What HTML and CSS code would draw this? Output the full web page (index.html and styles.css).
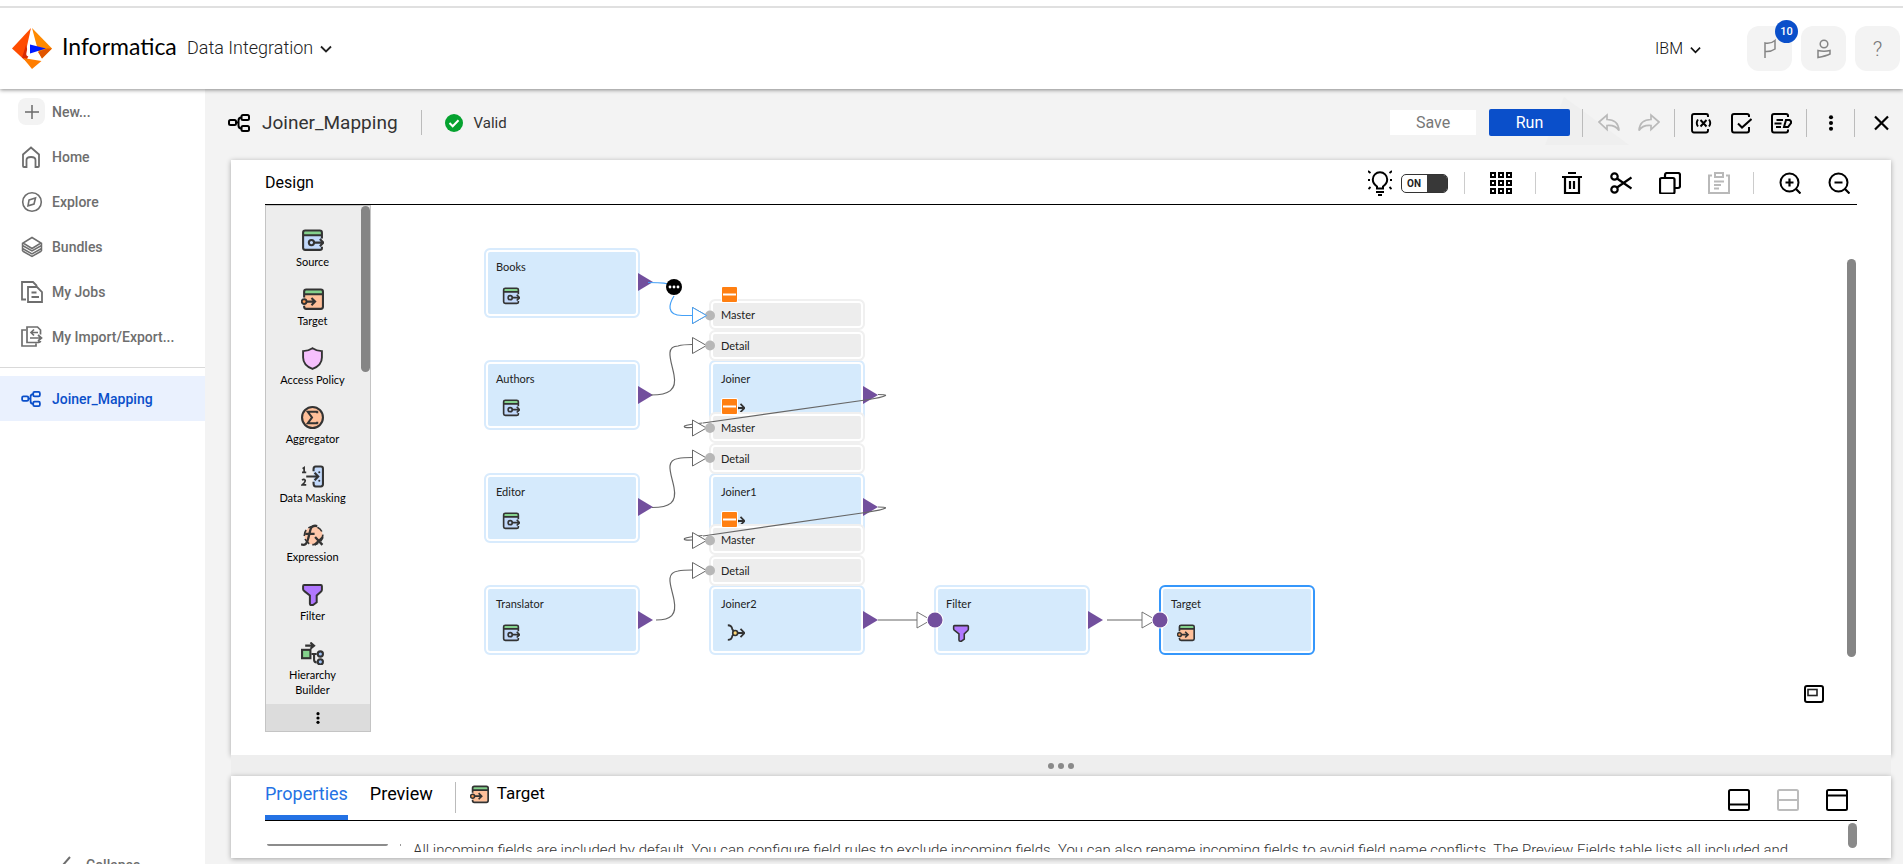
FILE: index.html
```html
<!DOCTYPE html>
<html lang="en">
<head>
<meta charset="utf-8">
<title>Joiner_Mapping - Data Integration</title>
<link rel="stylesheet" href="styles.css">
</head>
<body>
<svg class="symbols" aria-hidden="true">
  <symbol id="i-mapping" viewBox="0 0 22 18"><g fill="none" stroke="currentColor" stroke-width="2"><rect x="1" y="6" width="7" height="5" rx="1.5"/><rect x="13.500" y="1" width="7.500" height="5" rx="1.500"/><rect x="13.500" y="12" width="7.500" height="5" rx="1.500"/><path d="M8 8.500h2.500M13.500 3.500c-2 0-3 .8-3 3v5c0 2.200 1 3 3 3"/></g></symbol>
  <symbol id="i-chev" viewBox="0 0 12 8"><path d="M1 1.500l5 5 5-5" fill="none" stroke="currentColor" stroke-width="1.800"/></symbol>
  <symbol id="i-source" viewBox="0 0 22 22"><path d="M2 6h18v13.500H2z" fill="#c2d9fb"/><path d="M2 2h18v4H2z" fill="#84d18c"/><path d="M20 9V3.500Q20 1.500 18 1.500H4Q2 1.500 2 3.500V18Q2 20 4 20h14q2 0 2-1.500V17M2 6h18" fill="none" stroke="#333" stroke-width="2"/><circle cx="10" cy="13" r="2.500" fill="#c2d9fb" stroke="#333" stroke-width="2"/><path d="M12.500 13H21M18 9.500l3.500 3.500-3.500 3.500" fill="none" stroke="#333" stroke-width="2"/></symbol>
  <symbol id="i-target" viewBox="0 0 22 22"><path d="M3 6h17.500v13.500H3z" fill="#ffc09a"/><path d="M3 2h17.500v4H3z" fill="#84d18c"/><path d="M3 9V3.500Q3 1.500 5 1.500h14q2 0 2 2V18q0 2-2 2H5q-2 0-2-2v-1M3 6h18" fill="none" stroke="#333" stroke-width="2"/><circle cx="3" cy="13" r="2.300" fill="#ff9a52" stroke="#333" stroke-width="1.800"/><path d="M5.500 13H13M10 9.500l3.500 3.500-3.500 3.500" fill="none" stroke="#333" stroke-width="2"/></symbol>
  <symbol id="i-shield" viewBox="0 0 22 22"><path d="M11 1.200c2.500 1.700 5.500 2.600 9 2.800v6c0 5.500-3.500 8.800-9 11-5.500-2.200-9-5.500-9-11V4c3.500-.2 6.500-1.100 9-2.800z" fill="#f6c0fd" stroke="#333" stroke-width="1.800"/></symbol>
  <symbol id="i-aggr" viewBox="0 0 22 22"><circle cx="11" cy="11" r="10" fill="#ffc09a" stroke="#333" stroke-width="2"/><path d="M16 5.500H6.500l4 5.500-4 5.500H16M15.500 5v2M15.500 17v-2" fill="none" stroke="#333" stroke-width="2"/></symbol>
  <symbol id="i-mask" viewBox="0 0 22 22"><path d="M12 2h9v18h-9z" fill="#c2d9fb"/><path d="M12 6V4q0-2.500 2-2.500h5q2 0 2 2v15q0 2-2 2h-5q-2 0-2-3v-1.500M5 11h11M13 7.500l3.500 3.500-3.500 3.500" fill="none" stroke="#333" stroke-width="2"/><path d="M1.500 3.500L3 2.500v4.500M1 7h4M1 14.500q1.800-1.500 3 0Q4.500 16 1.200 19H5" fill="none" stroke="#333" stroke-width="1.600"/><circle cx="17.500" cy="7" r="1" fill="#333"/><circle cx="17.500" cy="15" r="1" fill="#333"/></symbol>
  <symbol id="i-fx" viewBox="0 0 22 22"><circle cx="12" cy="11" r="8.800" fill="#ffc8aa" stroke="#333" stroke-width="1.600" stroke-dasharray="6 3"/><path d="M0 19.500c4 1.500 6-1 7-6L9 5.500C9.800 2.500 12 1 15.500 2M4 9.500h9" fill="none" stroke="#333" stroke-width="2.200"/><path d="M13.500 12.500l7 7.500M21 12.500l-8 7.500" stroke="#333" stroke-width="2.200"/></symbol>
  <symbol id="i-filter" viewBox="0 0 22 22"><path d="M3 2h16q1 0 1 1v3.500q0 1-1 1.800l-4 3.700v6.500L11.500 21H10q-1.500 0-1.500-1.500V12l-5-4Q2 7 2 6V3q0-1 1-1z" fill="#b178ff" stroke="#333" stroke-width="1.900"/></symbol>
  <symbol id="i-hier" viewBox="0 0 22 22"><rect x="1" y="7.500" width="8" height="8" fill="#84d18c" stroke="#333" stroke-width="2"/><path d="M4 3.500h8M9 .5l3.500 3L9 6.500M10 11.500h5M12.500 11.500V17q0 2.500 2.500 2.500" fill="none" stroke="#333" stroke-width="2"/><circle cx="18.500" cy="11.500" r="2.500" fill="#9dc0f5" stroke="#333" stroke-width="2"/><circle cx="18.500" cy="19" r="2.500" fill="#9dc0f5" stroke="#333" stroke-width="2"/></symbol>
  <symbol id="i-joiner" viewBox="0 0 22 22"><path d="M1 1.500C4 1.500 6 3 6.500 6.500L8.500 9M1 19.500c3 0 5-1.500 5.500-5l2-2M12 11h9.500M16.500 6l5 5-5 5" fill="none" stroke="#333" stroke-width="2.200"/><circle cx="10" cy="11" r="3" fill="#ffd978" stroke="#333" stroke-width="2"/></symbol>
</svg>

<header class="topbar">
  <svg class="logo" viewBox="0 0 40 41" aria-hidden="true"><path d="M19 0L0 20.500l12 11z" fill="#ff4d00"/><path d="M10 29.500L14 17l3 10-3 6z" fill="#d92b00"/><path d="M20 0l20 20.500-10 10-4-8z" fill="#ff8a00"/><path d="M26 24l9-3.500 5 0-10 10z" fill="#e05500"/><path d="M11 30l18.500 3L20 41z" fill="#ff7d00"/><path d="M19.500 0l-5 24.500q-1 3.500 2 4l13.500 3.500L18 23z" fill="#fff"/><path d="M18 16.500l16 4-16 5z" fill="#001aff"/></svg>
  <span class="brand">Informatica</span>
  <button class="product">Data Integration <svg class="chev" aria-hidden="true"><use href="#i-chev"/></svg></button>
  <button class="org">IBM <svg class="chev small" aria-hidden="true"><use href="#i-chev"/></svg></button>
  <nav class="top-actions" aria-label="Account">
    <button class="tile" aria-label="Notifications"><svg width="22" height="22" viewBox="0 0 22 22"><path d="M6 20V5q6 1 10-2.500V11q-4 3-10 2.500" fill="none" stroke="#858585" stroke-width="1.500"/></svg><span class="badge">10</span></button>
    <button class="tile" aria-label="User"><svg width="22" height="22" viewBox="0 0 22 22"><circle cx="11" cy="6" r="3.800" fill="none" stroke="#858585" stroke-width="1.500"/><path d="M5 12.500q6 1.500 12 0V16q-4 2-12 3.500z" fill="none" stroke="#858585" stroke-width="1.500"/></svg></button>
    <button class="tile help" aria-label="Help">?</button>
  </nav>
</header>

<div class="shell">
  <nav class="sidebar" aria-label="Main">
    <a class="side" href="#"><span class="plus"><svg width="14" height="14" viewBox="0 0 14 14"><path d="M7 0v14M0 7h14" stroke="#6b6b6b" stroke-width="1.500"/></svg></span>New...</a>
    <a class="side" href="#"><svg class="si" viewBox="0 0 22 22"><path d="M2 8.500L10 1.500l8 7V20q0 1-1 1h-2.500V14q0-3-4.500-3t-4.500 3v7H3q-1 0-1-1z" fill="none" stroke="currentColor" stroke-width="1.800"/></svg>Home</a>
    <a class="side" href="#"><svg class="si" viewBox="0 0 22 22"><circle cx="11" cy="11" r="9.300" fill="none" stroke="currentColor" stroke-width="1.600"/><path d="M8 9l6.500-2L13 13l-6 1.800z" fill="none" stroke="currentColor" stroke-width="1.600"/></svg>Explore</a>
    <a class="side" href="#"><svg class="si" viewBox="0 0 22 22"><path d="M11 1.500L20 7l-9 5.500L2 7zM1.500 9.500L11 15l9.500-5.500M1.500 12.500L11 18l9.500-5.500M1.500 15L11 20.500l9.500-5.500M1.500 7v8M20.500 7v8" fill="none" stroke="currentColor" stroke-width="1.500"/></svg>Bundles</a>
    <a class="side" href="#"><svg class="si" viewBox="0 0 22 22"><path d="M5 18.500H1V1h11l4 4M7 6h9l5 5v10H7zM10.500 11.500h5M10.500 16H18" fill="none" stroke="currentColor" stroke-width="1.800"/></svg>My Jobs</a>
    <a class="side" href="#"><svg class="si" viewBox="0 0 22 22"><path d="M5 4H1v16h14v-2.500M19.500 8.500V4l-3-3H6v15.500h10q3.500 0 3.500-1.500M20 12H9M17 9l3.500 3-3.500 3M10 6.500h7M13 3.500l-3 3 3 3" fill="none" stroke="currentColor" stroke-width="1.700"/></svg>My Import/Export...</a>
    <hr class="side-rule">
    <a class="side active" href="#" aria-current="page"><svg class="si map"><use href="#i-mapping"/></svg>Joiner_Mapping</a>
    <button class="collapse"><svg width="10" height="18" viewBox="0 0 10 18"><path d="M9 1L2 9l7 8" fill="none" stroke="currentColor" stroke-width="2"/></svg>Collapse</button>
  </nav>

  <main class="main">
    <div class="docbar">
      <svg class="doc-icon" aria-hidden="true"><use href="#i-mapping"/></svg>
      <h1>Joiner_Mapping</h1>
      <span class="vr"></span>
      <svg class="ok" viewBox="0 0 18 18" aria-hidden="true"><circle cx="9" cy="9" r="9" fill="#05a22f"/><path d="M4.500 9l3.200 3.200 5.800-6" fill="none" stroke="#fff" stroke-width="2"/></svg>
      <span class="valid">Valid</span>
      <div class="doc-actions">
        <svg class="mark" viewBox="0 0 84 48" aria-hidden="true"><path d="M19 0l65 48H0z" fill="#efefef"/></svg>
        <button class="save" disabled>Save</button>
        <button class="run">Run</button>
        <span class="vr"></span>
        <button class="ib" aria-label="Undo" disabled><svg viewBox="0 0 22 22"><path d="M1 10l8-7v4.500c7 0 11.500 4 12 11-2.500-4-6-5.500-12-5v4z" fill="none" stroke="#b9b9b9" stroke-width="1.700"/></svg></button>
        <button class="ib" aria-label="Redo" disabled><svg viewBox="0 0 22 22"><path d="M21 10l-8-7v4.500C6 7.500 1.500 11.500 1 18.500c2.500-4 6-5.500 12-5v4z" fill="none" stroke="#b9b9b9" stroke-width="1.700"/></svg></button>
        <span class="vr"></span>
        <button class="ib" aria-label="Parameters"><svg viewBox="0 0 22 22"><path d="M18 5V3.500Q18 2 16 2H4Q2 2 2 4v14q0 2.500 2 2.500h12q2 0 2-2V17M8 7.500Q5.500 11 8 14.500M19 7.500q2.500 3.500 0 7M10.500 8l6 6.500M16.500 8l-6 6.500" fill="none" stroke="#000" stroke-width="1.900"/></svg></button>
        <button class="ib" aria-label="Validate"><svg viewBox="0 0 22 22"><path d="M19 5V3.500Q19 2 17 2H4Q2 2 2 4v14q0 2.500 2 2.500h13q2 0 2-2V15M8 11.500l4 4L21.500 7" fill="none" stroke="#000" stroke-width="2"/></svg></button>
        <button class="ib" aria-label="Edit notes"><svg viewBox="0 0 22 22"><path d="M18 5V3.500Q18 2 16 2H4Q2 2 2 4v14q0 2.500 2 2.500h12q2 0 2-2V17.500M6.500 8H13M4.500 11.500h7M6 15h5M14 15l2-7h3.500q2 1 1.500 3l-3 4z" fill="none" stroke="#000" stroke-width="2"/></svg></button>
        <span class="vr"></span>
        <button class="ib narrow" aria-label="More"><svg viewBox="0 0 22 22"><circle cx="11" cy="4" r="2.500"/><circle cx="11" cy="11" r="2.500"/><circle cx="11" cy="18" r="2.500"/></svg></button>
        <span class="vr"></span>
        <button class="ib" aria-label="Close"><svg viewBox="0 0 22 22"><path d="M5 4.500l13 13M18 4.500l-13 13" stroke="#000" stroke-width="2.200"/></svg></button>
      </div>
    </div>

    <section class="panel design">
      <div class="panel-head">
        <h2>Design</h2>
        <div class="tools">
          <svg class="bulb" viewBox="0 0 24 26" aria-hidden="true"><path d="M9 18.500v-2C5.500 14 4.800 11.500 4.800 9.500a7.200 7.200 0 0 1 14.400 0c0 2-.7 4.500-4.200 7v2zM8 22h8M10 25h4" fill="none" stroke="#000" stroke-width="2"/><path d="M0 1l2.500 2M24 1l-2.500 2M0 10h2M24 10h-2M.5 19l2-2M23.500 19l-2-2" stroke="#000" stroke-width="1.800"/></svg>
          <button class="toggle" role="switch" aria-checked="true" aria-label="Recommendations"><span>ON</span><i></i></button>
          <span class="vr"></span>
          <button class="ib" aria-label="Grid"><svg viewBox="0 0 22 22"><g fill="none" stroke="#000" stroke-width="2"><rect x="1" y="1" width="4" height="4"/><rect x="9" y="1" width="4" height="4"/><rect x="17" y="1" width="4" height="4"/><rect x="1" y="9" width="4" height="4"/><rect x="9" y="9" width="4" height="4"/><rect x="17" y="9" width="4" height="4"/><rect x="1" y="17" width="4" height="4"/><rect x="9" y="17" width="4" height="4"/><rect x="17" y="17" width="4" height="4"/></g></svg></button>
          <span class="vr"></span>
          <button class="ib" aria-label="Delete"><svg viewBox="0 0 22 22"><path d="M7 1h8M1 5h20M4 5v16h14V5M9 9v8M13 9v8" fill="none" stroke="#000" stroke-width="2.200"/></svg></button>
          <button class="ib" aria-label="Cut"><svg viewBox="0 0 22 22"><g fill="none" stroke="#000" stroke-width="2.200"><circle cx="4.500" cy="4.500" r="3.200"/><circle cx="4.500" cy="17.500" r="3.200"/><path d="M7 6.500L21.500 16.500M7 15.500L21.500 5.500"/></g></svg></button>
          <button class="ib" aria-label="Copy"><svg viewBox="0 0 22 22"><path d="M1 7.500Q1 6 2.500 6H14q1.500 0 1.500 1.500V20q0 1.500-1.500 1.500H2.500Q1 21.500 1 20zM6 5.500V3Q6 1 8 1h11q2 0 2 2v11q0 2-2 2h-3" fill="none" stroke="#000" stroke-width="2.200"/></svg></button>
          <button class="ib" aria-label="Paste" disabled><svg viewBox="0 0 22 22"><path d="M4 3.500H1V21h20V3.500h-3M7 1h8v4H7zM6 9.500h10M6 13h7M6 16.500h5" fill="none" stroke="#b9b9b9" stroke-width="2"/></svg></button>
          <span class="vr"></span>
          <button class="ib" aria-label="Zoom in"><svg viewBox="0 0 22 22"><circle cx="10.500" cy="10.500" r="9" fill="none" stroke="#000" stroke-width="2"/><path d="M17 17l4.500 4.500M6.500 10.500h8M10.500 6.500v8" stroke="#000" stroke-width="2.200"/></svg></button>
          <button class="ib" aria-label="Zoom out"><svg viewBox="0 0 22 22"><circle cx="10.500" cy="10.500" r="9" fill="none" stroke="#000" stroke-width="2"/><path d="M17 17l4.500 4.500M6.500 10.500h8" stroke="#000" stroke-width="2.200"/></svg></button>
        </div>
      </div>
      <div class="workspace">
        <div class="palette">
          <ul class="palette-list">
            <li><svg><use href="#i-source"/></svg>Source</li>
            <li><svg><use href="#i-target"/></svg>Target</li>
            <li><svg><use href="#i-shield"/></svg>Access Policy</li>
            <li><svg><use href="#i-aggr"/></svg>Aggregator</li>
            <li><svg><use href="#i-mask"/></svg>Data Masking</li>
            <li><svg><use href="#i-fx"/></svg>Expression</li>
            <li><svg><use href="#i-filter"/></svg>Filter</li>
            <li><svg><use href="#i-hier"/></svg>Hierarchy Builder</li>
          </ul>
          <span class="thumb palette-thumb"></span>
          <button class="palette-more" aria-label="More transformations"><svg width="4" height="12" viewBox="0 0 4 12"><circle cx="2" cy="1.700" r="1.600"/><circle cx="2" cy="6" r="1.600"/><circle cx="2" cy="10.300" r="1.600"/></svg></button>
        </div>
        <div class="canvas">
          <div class="node n-books">Books<svg><use href="#i-source"/></svg></div>
          <div class="node n-authors">Authors<svg><use href="#i-source"/></svg></div>
          <div class="node n-editor">Editor<svg><use href="#i-source"/></svg></div>
          <div class="node n-translator">Translator<svg><use href="#i-source"/></svg></div>
          <div class="node n-joiner">Joiner<svg><use href="#i-joiner"/></svg></div>
          <div class="node n-joiner1">Joiner1<svg><use href="#i-joiner"/></svg></div>
          <div class="node n-joiner2">Joiner2<svg><use href="#i-joiner"/></svg></div>
          <div class="group g0"><div class="port">Master</div><div class="port">Detail</div></div>
          <div class="group g1"><div class="port">Master</div><div class="port">Detail</div></div>
          <div class="group g2"><div class="port">Master</div><div class="port">Detail</div></div>
          <div class="node n-filter">Filter<svg><use href="#i-filter"/></svg></div>
          <div class="node n-target selected">Target<svg><use href="#i-target"/></svg></div>
          <svg class="links" aria-hidden="true">
            <defs>
              <path id="out" d="M0-9l15 9-15 9z" fill="#724f9d"/>
              <g id="in"><path d="M0-8l14 8-14 8z" fill="#fff" stroke="#666"/><circle cx="17.500" cy="0" r="5" fill="#b7b7b7"/></g>
              <g id="in2"><path d="M0-8l14 8-14 8z" fill="#fff" stroke="#777"/><circle cx="18" cy="0" r="8.500" fill="#fff"/><circle cx="18" cy="0" r="7.500" fill="#724f9d"/></g>
              <g id="minus"><rect x="-1" y="-1" width="17" height="17" rx="2" fill="#fff"/><rect width="15" height="15" rx="1" fill="#ff7f11"/><path d="M1 7.500h13" stroke="#fff" stroke-width="2"/></g>
            </defs>
            <g transform="translate(-371 -205)">
              <use href="#out" x="638" y="282"/><use href="#out" x="638" y="395"/><use href="#out" x="638" y="507"/><use href="#out" x="638" y="620"/>
              <use href="#out" x="863" y="395"/><use href="#out" x="863" y="507"/><use href="#out" x="863" y="620"/><use href="#out" x="1088" y="620"/>
              <g fill="none" stroke="#666" stroke-width="1.200">
                <path d="M648 282.500c12 0 22 0 25 5M674 296c-5 8-8 19 8 19.500h10" stroke="#45a1f7"/>
                <path d="M651 395c18 0 26-5 23-20-2-12-10-29 4-29q5-1.500 14-1.500"/>
                <path d="M652 507.500c18 0 25-5 22-20-2-12-10-27 4-29q5-1 14-1"/>
                <path d="M656 620c15 0 21-5 18-20-2-12-10-27 4-29q5-1 14-1"/>
                <path d="M878 394.500q8 0 7.500 1-3 2-20 4.500L703 423M692 427.500q-9 .5-7.500-1.500 3-1.500 18-3"/>
                <path d="M878 507q8 0 7.500 1-3 2-20 4.500L703 536M692 540q-9 .5-7.500-1.500 3-1.500 18-3"/>
                <path d="M878 620h39M1107 620h36"/>
              </g>
              <use href="#in" x="692.500" y="315.500"/><use href="#in" x="692.500" y="345.500"/><use href="#in" x="692.500" y="428"/><use href="#in" x="692.500" y="458"/><use href="#in" x="692.500" y="540.500"/><use href="#in" x="692.500" y="570.500"/>
              <path d="M692.500 307.500l14 8-14 8z" fill="#fff" stroke="#45a1f7"/>
              <use href="#in2" x="917" y="620"/><use href="#in2" x="1142" y="620"/>
              <use href="#minus" x="722" y="287"/><use href="#minus" x="722" y="399"/><use href="#minus" x="722" y="512"/>
              <circle cx="674" cy="287" r="8"/><g fill="#fff"><circle cx="670" cy="287" r="1.400"/><circle cx="674" cy="287" r="1.400"/><circle cx="678" cy="287" r="1.400"/></g>
            </g>
          </svg>
          <span class="thumb canvas-thumb"></span>
          <button class="minimap" aria-label="Overview map"><svg width="20" height="18" viewBox="0 0 20 18"><rect x="1" y="1" width="18" height="16" rx="2" fill="none" stroke="#000" stroke-width="2"/><rect x="4" y="4.500" width="9" height="6" fill="none" stroke="#222" stroke-width="1.600"/></svg></button>
        </div>
      </div>
    </section>

    <div class="splitter" role="separator"><i></i><i></i><i></i></div>

    <section class="panel props">
      <div class="props-head">
        <button class="tab on">Properties</button>
        <button class="tab">Preview</button>
        <span class="vr"></span>
        <svg class="obj-icon" aria-hidden="true"><use href="#i-target"/></svg>
        <span class="obj">Target</span>
        <div class="views">
          <button class="ib" aria-label="Minimize panel"><svg viewBox="0 0 22 22"><rect x="1" y="1" width="20" height="20" rx="1.500" fill="none" stroke="#000" stroke-width="2"/><path d="M1 15.500h20" stroke="#000" stroke-width="2"/></svg></button>
          <button class="ib" aria-label="Split panel" disabled><svg viewBox="0 0 22 22"><rect x="1" y="1" width="20" height="20" rx="1.500" fill="none" stroke="#bcbcbc" stroke-width="2"/><path d="M1 11h20" stroke="#bcbcbc" stroke-width="2"/></svg></button>
          <button class="ib" aria-label="Maximize panel"><svg viewBox="0 0 22 22"><rect x="1" y="1" width="20" height="20" rx="1.500" fill="none" stroke="#000" stroke-width="2"/><path d="M1 6.500h20" stroke="#000" stroke-width="2"/></svg></button>
        </div>
      </div>
      <div class="props-body">
        <span class="cutoff"></span><span class="tick"></span>
        <p>All incoming fields are included by default. You can configure field rules to exclude incoming fields. You can also rename incoming fields to avoid field name conflicts. The Preview Fields table lists all included and</p>
        <span class="thumb props-thumb"></span>
      </div>
    </section>
  </main>
</div>
</body>
</html>
```
FILE: styles.css
```css
* { box-sizing: border-box; }
body {
  margin: 0;
  height: 100vh;
  overflow: hidden;
  display: flex;
  flex-direction: column;
  background: #fff;
  font-family: Roboto, "Liberation Sans", sans-serif;
  color: #222;
}
button { border: 0; padding: 0; background: none; font: inherit; color: inherit; }
h1, h2, p, ul { margin: 0; padding: 0; font-weight: 400; }
svg { display: block; flex: none; }
.symbols { position: absolute; width: 0; height: 0; }

.topbar {
  position: relative;
  z-index: 2;
  flex: none;
  height: 89px;
  padding: 8px 3px 0 12px;
  display: flex;
  align-items: center;
  background: linear-gradient(#fff 6px, #e0e0e0 6px, #e0e0e0 8px, #fff 8px);
  box-shadow: 0 1px 4px rgba(0, 0, 0, .45);
}
.logo { width: 40px; height: 41px; }
.brand { margin-left: 10px; padding-bottom: 5px; width: 125px; font: 23px/30px Lato, sans-serif; color: #000; }
.product { display: flex; align-items: center; gap: 7px; padding-bottom: 2px; font-size: 18px; font-weight: 300; color: #222; }
.chev { width: 12px; height: 8px; margin-top: 2px; }
.chev.small { width: 11px; }
.org { margin-left: auto; display: flex; align-items: center; gap: 7px; font-size: 16px; font-weight: 300; color: #111; }
.top-actions { display: flex; gap: 9px; margin-left: 46px; }
.tile {
  position: relative;
  width: 45px;
  height: 45px;
  border-radius: 12px;
  background: #f3f3f3;
  display: flex;
  align-items: center;
  justify-content: center;
}
.help { font-size: 21px; font-weight: 300; color: #777; }
.badge {
  position: absolute;
  top: -6px;
  right: -6px;
  width: 23px;
  height: 23px;
  border-radius: 50%;
  background: #0a4fca;
  color: #fff;
  font-size: 11px;
  font-weight: 500;
  line-height: 23px;
}

.shell { flex: 1; min-height: 0; display: flex; }
.sidebar { flex: none; width: 205px; display: flex; flex-direction: column; overflow: hidden; background: #fff; }
.side {
  flex: none;
  display: flex;
  align-items: center;
  height: 45px;
  padding-left: 52px;
  font-size: 14px;
  font-weight: 500;
  color: #6e6e6e;
  text-decoration: none;
}
.si { width: 22px; height: 22px; margin: 0 9px 0 -31px; }
.si.map { width: 20px; height: 16px; margin-right: 11px; }
.plus {
  width: 27px;
  height: 27px;
  margin: 0 7px 0 -34px;
  border-radius: 8px;
  background: #f3f3f3;
  display: flex;
  align-items: center;
  justify-content: center;
}
.side-rule { flex: none; width: 100%; height: 1px; margin: 8px 0; border: 0; background: #d9d9d9; }
.active { background: #eaf1fe; color: #0a4fca; }
.collapse {
  margin: auto 0 -13px;
  padding-left: 61px;
  height: 24px;
  display: flex;
  align-items: center;
  gap: 15px;
  font-size: 14px;
  font-weight: 500;
  color: #6e6e6e;
}

.main { flex: 1; min-width: 0; display: flex; flex-direction: column; background: #f3f3f3; padding: 0 12px 6px 26px; }
.docbar { flex: none; height: 71px; padding-bottom: 4px; display: flex; align-items: center; margin-right: -12px; margin-left: -3px; }
.doc-icon { width: 22px; height: 18px; color: #000; }
.docbar h1 { margin-left: 12px; font-size: 19px; font-weight: 400; color: #333; }
.vr { flex: none; width: 1px; height: 25px; background: #bbb; }
.docbar > .vr { margin: 0 23px; }
.ok { width: 18px; height: 18px; }
.valid { margin-left: 11px; font-size: 15px; color: #333; }
.doc-actions { position: relative; margin-left: auto; display: flex; align-items: center; padding-right: 2px; }
.doc-actions > * { position: relative; }
.doc-actions .vr { height: 28px; }
.doc-actions .mark { position: absolute; left: 155px; top: -12px; width: 84px; height: 48px; }
.save { width: 86px; height: 25px; margin-right: 13px; background: #fff; color: #777; font-size: 16px; }
.run { width: 81px; height: 27px; margin-right: 12px; border-radius: 2px; background: #0a4fca; color: #fff; font-size: 16px; }
.ib { width: 40px; height: 28px; display: flex; align-items: center; justify-content: center; }
.ib svg { width: 22px; height: 22px; }
.doc-actions .vr + .ib { margin-left: 6px; }
.doc-actions .ib + .vr { margin-left: 5px; }
.doc-actions .narrow { width: 36px; }
.doc-actions .narrow svg { width: 18px; height: 18px; }

.panel { background: #fff; box-shadow: 0 1px 5px rgba(0, 0, 0, .32); }
.design { flex: 1; min-height: 0; display: flex; flex-direction: column; padding: 0 34px 23px; }
.panel-head { flex: none; height: 45px; display: flex; align-items: center; border-bottom: 1px solid #000; padding-top: 2px; }
.panel-head h2 { font-size: 16px; line-height: 20px; color: #000; }
.tools { margin-left: auto; display: flex; align-items: center; margin-right: -6px; }
.tools .vr { height: 22px; background: #ccc; }
.tools .ib { width: 49px; }
.tools .vr + .ib { margin-left: 11px; }
.tools .ib + .vr { margin-left: 10px; }
.tools .toggle + .vr { margin-left: 16px; }
.bulb { width: 24px; height: 26px; margin-right: 9px; }
.toggle {
  width: 47px;
  height: 19px;
  border: 1px solid #333;
  border-radius: 5px;
  display: flex;
  align-items: center;
  justify-content: space-between;
  overflow: hidden;
  padding-left: 5px;
  font-size: 10px;
  font-weight: 700;
  color: #222;
}
.toggle i { width: 20px; height: 19px; background: #383838; }

.workspace { flex: 1; min-height: 0; display: flex; }
.palette {
  position: relative;
  flex: none;
  width: 106px;
  border: 1px solid #c4c4c4;
  background: #ededed;
  display: flex;
  flex-direction: column;
  font-family: Lato, sans-serif;
  font-size: 11px;
  font-weight: 300;
  color: #000;
}
.palette-list { flex: 1; min-height: 0; overflow: hidden; list-style: none; padding: 23px 11px 0 0; }
.palette-list li {
  min-height: 59px;
  padding: 0 16px;
  display: flex;
  flex-direction: column;
  align-items: center;
  gap: 2px;
  line-height: 15px;
  text-align: center;
  white-space: nowrap;
}
.palette-list li:last-child { white-space: normal; }
.palette-list svg { width: 23px; height: 23px; }
.palette-more { flex: none; height: 27px; background: #dcdcdc; display: flex; align-items: center; justify-content: center; }
.thumb { position: absolute; width: 9px; border-radius: 5px; background: #858585; }
.palette-thumb { top: 0; right: 0; height: 166px; }

.canvas { position: relative; flex: 1; min-width: 0; font-family: Lato, sans-serif; font-size: 11px; color: #222; }
.node, .port {
  border: 2px solid #d8ebfd;
  border-radius: 6px;
  background: #d5eafc;
  box-shadow: inset 0 0 0 2px #fff;
}
.node { position: absolute; width: 156px; height: 70px; padding: 9px 10px; line-height: 15px; }
.node svg { width: 18px; height: 18px; margin: 13px 0 0 6px; }
.selected { border-color: #3597fb; }
.n-books { left: 113px; top: 43px; }
.n-authors { left: 113px; top: 155px; }
.n-editor { left: 113px; top: 268px; }
.n-translator { left: 113px; top: 380px; }
.n-joiner { left: 338px; top: 155px; }
.n-joiner1 { left: 338px; top: 268px; }
.n-joiner2 { left: 338px; top: 380px; }
.n-filter { left: 563px; top: 380px; }
.n-target { left: 788px; top: 380px; }
.group { position: absolute; left: 338px; width: 156px; }
.port { height: 31px; padding-left: 10px; border-color: #f0f0f0; background: #ededed; line-height: 27px; }
.g0 { top: 94px; }
.g1 { top: 207px; }
.g2 { top: 319px; }
.links { position: absolute; left: 0; top: 0; width: 100%; height: 100%; overflow: visible; }
.canvas-thumb { top: 54px; right: 1px; height: 398px; }
.minimap { position: absolute; right: 33px; bottom: 29px; }

.splitter { flex: none; height: 21px; display: flex; align-items: center; justify-content: center; gap: 4px; background: #eee; }
.splitter i { width: 6px; height: 6px; border-radius: 50%; background: #8a8a8a; }

.props { flex: none; padding: 0 34px 6px; }
.props-head { height: 45px; display: flex; align-items: stretch; border-bottom: 1px solid #000; font-size: 18px; color: #000; }
.tab { height: 44px; margin-right: 22px; padding-bottom: 5px; border-bottom: 5px solid transparent; }
.tab.on { color: #2472e4; border-bottom-color: #2472e4; }
.props-head .vr { height: 31px; margin: 6px 14px 0 0; }
.obj-icon { width: 19px; height: 19px; margin: 9px 8px 0 0; }
.obj { font-size: 17px; line-height: 34px; }
.views { margin-left: auto; display: flex; align-items: center; padding-top: 3px; margin-right: -4px; }
.views .ib { width: 49px; }
.props-body { position: relative; height: 31px; overflow: hidden; display: flex; }
.cutoff { flex: none; width: 121px; height: 2px; margin: 23px 0 0 2px; background: #8c8c8c; border-radius: 0 0 3px 3px; }
.tick { flex: none; width: 1px; height: 2px; margin: 23px 12px 0; background: #999; }
.props-body p { font-size: 15px; line-height: 20px; padding-top: 19px; white-space: nowrap; color: #333; font-weight: 300; }
.props-thumb { top: 2px; right: 0; height: 25px; background: #8a8a8a; }
```
